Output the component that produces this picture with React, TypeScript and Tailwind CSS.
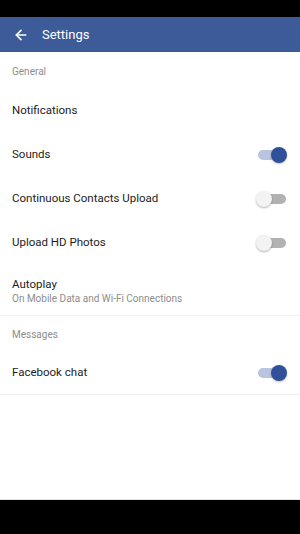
import { ArrowLeft } from 'lucide-react'

type Row = {
  label: string
  sub?: string
  toggle?: boolean
}

const GENERAL: Row[] = [
  { label: 'Notifications' },
  { label: 'Sounds', toggle: true },
  { label: 'Continuous Contacts Upload', toggle: false },
  { label: 'Upload HD Photos', toggle: false },
]

function Toggle({ on }: { on: boolean }) {
  return (
    <div className="relative w-[31px] h-4 flex items-center">
      <div className={on ? 'ml-[2px] w-[28px] h-[10px] rounded-full bg-[#b9c4de]' : 'ml-[2px] w-[28px] h-[10px] rounded-full bg-[#b2b2b2]'} />
      {on ? (
        <div className="absolute right-0 top-0 w-4 h-4 rounded-full bg-[#30509a] shadow-[0_1px_2px_rgba(0,0,0,0.25)]" />
      ) : (
        <div className="absolute left-0 top-0 w-4 h-4 rounded-full bg-[#f3f3f3] shadow-[0_1px_2px_rgba(0,0,0,0.3)]" />
      )}
    </div>
  )
}

function SectionHeader({ title, first }: { title: string; first?: boolean }) {
  return (
    <div className={first ? 'h-[37px] flex items-center px-3 pt-px text-[10px] text-[#8d8d8d]' : 'h-9 flex items-center px-3 pt-px text-[10px] text-[#8d8d8d]'}>
      {title}
    </div>
  )
}

function SettingRow({ row }: { row: Row }) {
  return (
    <div className="h-11 flex items-center justify-between pl-3 pr-[13px]">
      <span className="text-[11.5px] text-[#1c1c1c]">{row.label}</span>
      {row.toggle !== undefined && <Toggle on={row.toggle} />}
    </div>
  )
}

export default function App() {
  return (
    <div
      className="w-[300px] h-[534px] flex flex-col bg-white overflow-hidden"
      style={{ fontFamily: 'Roboto, "Noto Sans", sans-serif' }}
    >
      <div className="h-[17px] bg-black shrink-0" />
      <header className="h-[35px] shrink-0 bg-[#3d5a99] flex items-center gap-[13px] px-[13px] text-white">
        <ArrowLeft size={16} strokeWidth={2.5} />
        <h1 className="text-[13px]">Settings</h1>
      </header>

      <div className="flex-1">
        <SectionHeader title="General" first />
        {GENERAL.map((row) => (
          <SettingRow key={row.label} row={row} />
        ))}
        <div className="h-[51px] flex flex-col justify-center pt-[2px] px-3 border-b border-[#f1f1f1]">
          <span className="text-[11.5px] text-[#1c1c1c] leading-4">Autoplay</span>
          <span className="text-[10px] text-[#8d8d8d] leading-[14px]">On Mobile Data and Wi-Fi Connections</span>
        </div>
        <SectionHeader title="Messages" />
        <div className="border-b border-[#f1f1f1]">
          <div className="h-[42px] flex items-center justify-between pl-3 pr-[13px]">
            <span className="text-[11.5px] text-[#1c1c1c]">Facebook chat</span>
            <Toggle on />
          </div>
        </div>
      </div>

      <div className="h-[35px] shrink-0 bg-black border-t border-[#e5e5e5]" />
    </div>
  )
}
